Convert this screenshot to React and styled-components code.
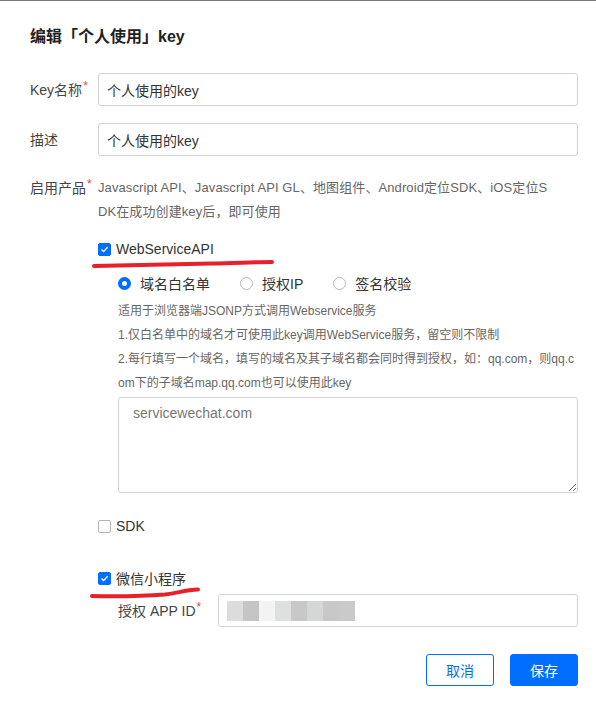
import styled, { createGlobalStyle } from "styled-components"

const GlobalStyle = createGlobalStyle`
  html, body {
    margin: 0;
    padding: 0;
    background: #ffffff;
  }
  body {
    font-family: "Liberation Sans", "Noto Sans CJK SC", sans-serif;
    color: #333;
  }
`

const BLUE = "#006eff"

const Dialog = styled.div`
  width: 596px;
  height: 701px;
  box-sizing: border-box;
  border-top: 1px solid #7a7a7a;
  padding: 0 18px 0 30px;
  display: flex;
  flex-direction: column;
`

const Title = styled.div`
  margin-top: 25px;
  height: 22px;
  line-height: 22px;
  font-size: 16px;
  font-weight: bold;
  color: #222;
`

const FormItem = styled.div`
  display: flex;
  align-items: ${p => (p.$top ? "flex-start" : "center")};
  margin-top: ${p => p.$mt}px;
`

const Label = styled.div`
  width: ${p => p.$width || 68}px;
  flex-shrink: 0;
  font-size: 14px;
  line-height: 24px;
  color: #444;
  white-space: nowrap;
`

const Required = styled.span`
  color: #e54545;
  font-size: 12px;
  vertical-align: top;
  line-height: 16px;
  margin-left: 1px;
`

const Input = styled.div`
  flex: 1;
  height: 33px;
  box-sizing: border-box;
  border: 1px solid #d3d3d3;
  border-radius: 3px;
  padding: 0 8px;
  display: flex;
  align-items: center;
  font-size: 14px;
  color: #333;
`

const Content = styled.div`
  flex: 1;
  display: flex;
  flex-direction: column;
`

const Hint = styled.div`
  font-size: 13px;
  letter-spacing: 0.1px;
  line-height: 24px;
  color: #666;
  white-space: nowrap;
`

const CheckRow = styled.div`
  position: relative;
  display: flex;
  align-items: center;
  height: 24px;
  margin-top: ${p => p.$mt}px;
  font-size: 14px;
  color: #333;
  gap: 5px;
`

const Box = styled.span`
  width: 13px;
  height: 13px;
  box-sizing: border-box;
  border-radius: 2px;
  border: 1px solid ${p => (p.$checked ? BLUE : "#b5b5b5")};
  background: ${p => (p.$checked ? BLUE : "#fff")};
  display: flex;
  align-items: center;
  justify-content: center;
`

const Panel = styled.div`
  margin-left: 20px;
  display: flex;
  flex-direction: column;
`

const RadioGroup = styled.div`
  display: flex;
  align-items: center;
  height: 24px;
  margin-top: 10px;
`

const RadioOption = styled.label`
  display: flex;
  align-items: center;
  gap: 9px;
  margin-right: 30px;
  font-size: 14px;
  color: #333;
`

const RadioDot = styled.span`
  width: 13px;
  height: 13px;
  box-sizing: border-box;
  border-radius: 50%;
  border: ${p => (p.$checked ? `4px solid ${BLUE}` : "1px solid #b8b8b8")};
  background: #fff;
`

const Desc = styled.div`
  margin-top: 4px;
  font-size: 12px;
  line-height: 24px;
  color: #666;
  white-space: nowrap;
`

const TextArea = styled.textarea`
  margin-top: 2px;
  height: 96px;
  box-sizing: border-box;
  border: 1px solid #d3d3d3;
  border-radius: 3px;
  padding: 5px 14px;
  font-family: "Liberation Sans", "Noto Sans CJK SC", sans-serif;
  font-size: 14px;
  line-height: 20px;
  color: #777;
  outline: none;
  resize: vertical;
`

const Mosaic = styled.div`
  display: flex;
  height: 20px;
`

const Tile = styled.span`
  width: 16px;
  height: 20px;
  background: ${p => p.$c};
`

const Footer = styled.div`
  margin-top: 27px;
  display: flex;
  justify-content: flex-end;
  gap: 16px;
`

const Button = styled.button`
  width: 68px;
  height: 32px;
  border-radius: 3px;
  border: 1px solid ${BLUE};
  background: ${p => (p.$primary ? BLUE : "#fff")};
  color: ${p => (p.$primary ? "#fff" : BLUE)};
  font-family: "Liberation Sans", "Noto Sans CJK SC", sans-serif;
  font-size: 14px;
  cursor: pointer;
`

const Scribble = styled.svg`
  position: absolute;
  left: ${p => p.$left}px;
  top: ${p => p.$top}px;
  pointer-events: none;
  overflow: visible;
`

function Check({ checked }) {
  return (
    <Box $checked={checked}>
      {checked && (
        <svg width="9" height="9" viewBox="0 0 9 9">
          <path d="M1.5 4.6 L3.6 6.6 L7.6 2.2" fill="none" stroke="#fff" strokeWidth="1.4" />
        </svg>
      )}
    </Box>
  )
}

const tiles = ["#dcdcdc", "#c5c5c5", "#f3f3f3", "#dde0de", "#c8c8c8", "#d5d6d6", "#c8c8c8", "#cacacb"]

function App() {
  return (
    <Dialog>
      <GlobalStyle />
      <Title>编辑「个人使用」key</Title>

      <FormItem $mt={25}>
        <Label>Key名称<Required>*</Required></Label>
        <Input>个人使用的key</Input>
      </FormItem>

      <FormItem $mt={17}>
        <Label>描述</Label>
        <Input>个人使用的key</Input>
      </FormItem>

      <FormItem $mt={20} $top>
        <Label>启用产品<Required>*</Required></Label>
        <Content>
          <Hint>
            Javascript API、Javascript API GL、地图组件、Android定位SDK、iOS定位S
            <br />
            DK在成功创建key后，即可使用
          </Hint>

          <CheckRow $mt={13}>
            <Check checked />
            WebServiceAPI
            <Scribble $left={-6} $top={22} width="184" height="10">
              <path d="M2 7 C40 6 80 5 120 4.5 C145 4 165 3 180 3" fill="none" stroke="#e8202a" strokeWidth="4" strokeLinecap="round" />
            </Scribble>
          </CheckRow>

          <Panel>
            <RadioGroup>
              <RadioOption><RadioDot $checked />域名白名单</RadioOption>
              <RadioOption><RadioDot />授权IP</RadioOption>
              <RadioOption><RadioDot />签名校验</RadioOption>
            </RadioGroup>
            <Desc>
              适用于浏览器端JSONP方式调用Webservice服务
              <br />
              1.仅白名单中的域名才可使用此key调用WebService服务，留空则不限制
              <br />
              2.每行填写一个域名，填写的域名及其子域名都会同时得到授权，如：qq.com，则qq.c
              <br />
              om下的子域名map.qq.com也可以使用此key
            </Desc>
            <TextArea defaultValue="servicewechat.com" />
          </Panel>

          <CheckRow $mt={21}>
            <Check />
            SDK
          </CheckRow>

          <CheckRow $mt={28}>
            <Check checked />
            微信小程序
            <Scribble $left={-8} $top={18} width="112" height="14">
              <path d="M2 12 C25 12.5 55 12 75 10.5 C88 9 95 6 108 5.5" fill="none" stroke="#e8202a" strokeWidth="4" strokeLinecap="round" />
            </Scribble>
          </CheckRow>

          <Panel>
            <FormItem $mt={4}>
              <Label $width={100}>授权 APP ID<Required>*</Required></Label>
              <Input>
                <Mosaic>
                  {tiles.map((c, i) => (
                    <Tile key={i} $c={c} />
                  ))}
                </Mosaic>
              </Input>
            </FormItem>
          </Panel>
        </Content>
      </FormItem>

      <Footer>
        <Button>取消</Button>
        <Button $primary>保存</Button>
      </Footer>
    </Dialog>
  )
}

export default App
